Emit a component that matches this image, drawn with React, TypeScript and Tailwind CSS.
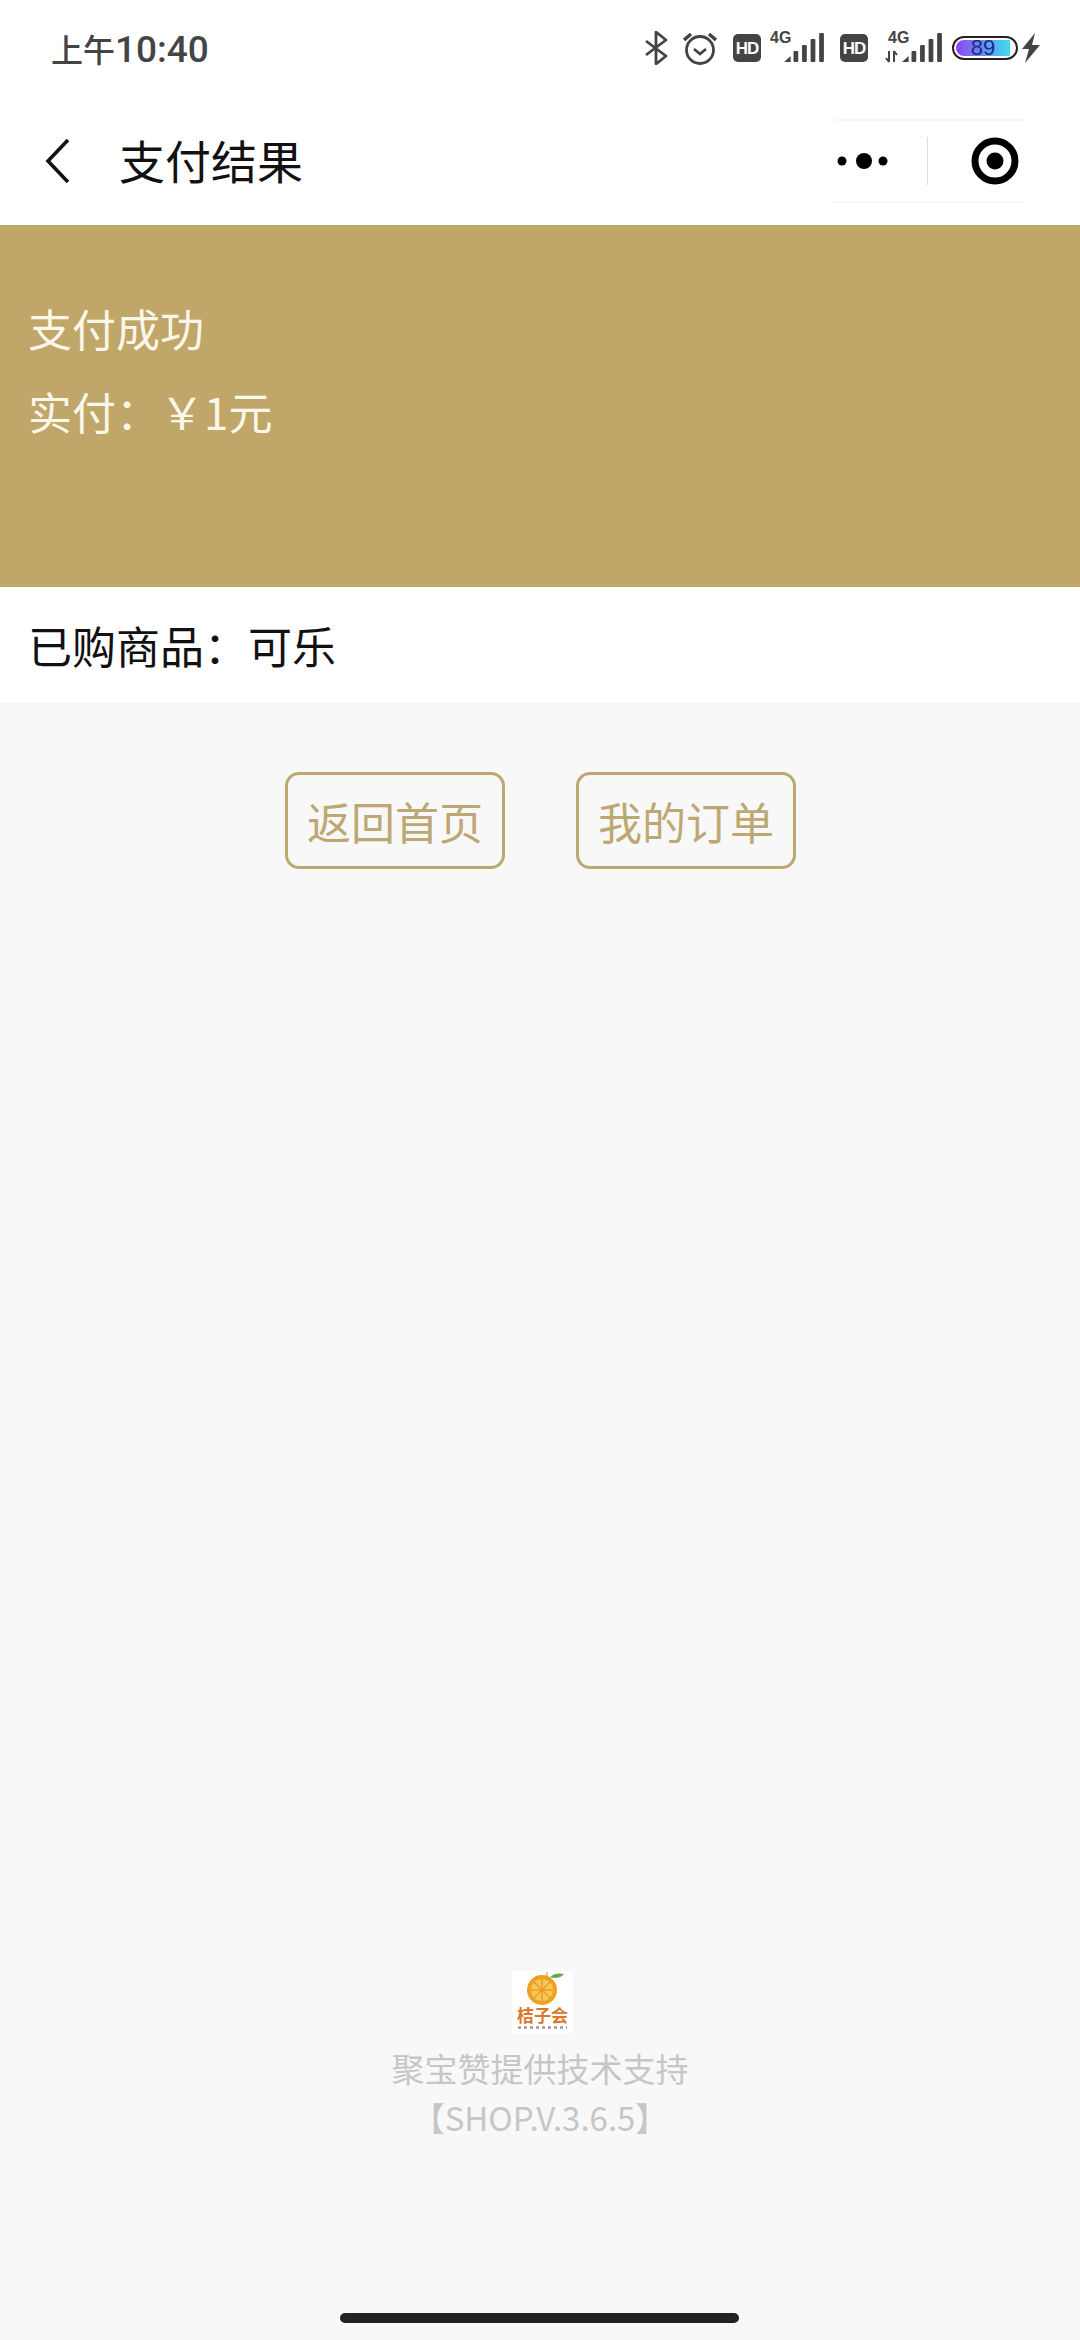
const cjk = "font-['Noto_Sans_CJK_SC','Noto_Sans',sans-serif]";

function Signal({ x = 0 }: { x?: number }) {
  return (
    <g fill="#444" transform={`translate(${x} 0) scale(0.95 1)`}>
      <path d="M0 29 L7 23 V29 Z" />
      <rect x="10" y="18" width="5" height="11" rx="1" />
      <rect x="19" y="12" width="5" height="17" rx="1" />
      <rect x="28" y="6" width="5" height="23" rx="1" />
      <rect x="37" y="0" width="5" height="29" rx="1" />
    </g>
  );
}

function HD() {
  return (
    <div className="w-[28px] h-[28px] rounded-[5px] bg-[#444] flex items-center justify-center text-white text-[17px] leading-none font-bold font-['Liberation_Sans',sans-serif] tracking-[-1px]">
      HD
    </div>
  );
}

function StatusBar() {
  return (
    <div className="h-[90px] pl-[51px] pr-[39px] flex items-start justify-between bg-white">
      <div className={`mt-[28px] text-[32px] leading-[40px] font-medium text-[#444] ${cjk} flex items-baseline`}>
        <span className="text-[32px]">上午</span>
        <span className="text-[37px] font-['Roboto',sans-serif] font-medium">10:40</span>
      </div>
      <div className="mt-[31px] flex items-center h-[34px]">
        <svg width="24" height="34" viewBox="0 0 24 34" fill="none" stroke="#444" strokeWidth="2.8">
          <path d="M1 10 L21 25 L11 33 V1 L21 9 L1 24" strokeLinejoin="round" />
        </svg>
        <svg width="36" height="34" viewBox="0 0 36 34" fill="none" stroke="#444" strokeWidth="2.8" className="ml-[13px]">
          <circle cx="18" cy="19" r="13.5" />
          <path d="M12 18 L18 23 L24 18" />
          <path d="M2 9 L9 3 M34 9 L27 3" strokeWidth="3.6" />
        </svg>
        <div className="ml-[15px]"><HD /></div>
        <div className="ml-[9px] relative w-[54px] h-[34px]">
          <span className="absolute left-0 -top-[1px] text-[16px] leading-[16px] font-semibold text-[#444] font-['Liberation_Sans',sans-serif]">4G</span>
          <svg width="54" height="30" viewBox="0 0 54 30" className="absolute left-0 top-[2px]"><Signal x={14} /></svg>
        </div>
        <div className="ml-[16px]"><HD /></div>
        <div className="ml-[17px] relative w-[58px] h-[34px]">
          <span className="absolute left-[3px] -top-[1px] text-[16px] leading-[16px] font-semibold text-[#444] font-['Liberation_Sans',sans-serif]">4G</span>
          <svg width="58" height="30" viewBox="0 0 58 30" className="absolute left-0 top-[2px]">
            <path d="M4 18 V29 M1 25 L4 29 M9 18 V29 M9 18 L12 22" stroke="#444" strokeWidth="2" fill="none" />
            <Signal x={17} />
          </svg>
        </div>
        <div className="ml-[9px] w-[66px] h-[24px] rounded-full border-[2.5px] border-[#222] p-[2px] flex">
          <div className="relative w-[54px] h-full rounded-l-full bg-gradient-to-r from-[#8b3ff0] via-[#5f8ff0] to-[#3fdcf0] flex items-center justify-center text-[22px] leading-none text-[#25258a] font-['Liberation_Sans',sans-serif]">
            89
          </div>
        </div>
        <svg width="20" height="30" viewBox="0 0 20 30" fill="#444" className="ml-[3px]">
          <path d="M14 0 L1 16 H8 L4 30 L19 12 H11 Z" />
        </svg>
      </div>
    </div>
  );
}

function NavBar() {
  return (
    <div className="h-[135px] pt-[7px] pl-[45px] pr-[55px] flex items-center bg-white">
      <svg width="24" height="46" viewBox="0 0 24 46" fill="none" stroke="#111" strokeWidth="3.6" className="shrink-0">
        <path d="M23 2 L3 23 L23 44" />
      </svg>
      <div className={`ml-[50px] mt-[-4px] text-[46px] leading-none text-[#111] ${cjk}`}>支付结果</div>
      <div className="ml-auto w-[192px] h-[84px] border-y-2 border-[#f8f8f8] flex items-center">
        <svg width="52" height="18" viewBox="0 0 52 18" fill="#000" className="ml-[3px]">
          <circle cx="6" cy="9" r="4.5" />
          <circle cx="28" cy="9" r="8" />
          <circle cx="47" cy="9" r="4.5" />
        </svg>
        <div className="ml-[39px] w-[1px] h-[48px] bg-[#dddddd]" />
        <svg width="48" height="48" viewBox="0 0 48 48" fill="none" className="ml-[43px]">
          <circle cx="24" cy="24" r="20" stroke="#000" strokeWidth="7" />
          <circle cx="24" cy="24" r="8.5" fill="#000" />
        </svg>
      </div>
    </div>
  );
}

function Button({ label }: { label: string }) {
  return (
    <div className={`w-[220px] h-[97px] rounded-[14px] border-[3px] border-[#bda873] flex items-center justify-center text-[44px] leading-none text-[#bda873] ${cjk}`}>
      {label}
    </div>
  );
}

function Logo() {
  return (
    <div className="ml-[5px] w-[61px] h-[62px] bg-white flex flex-col items-center">
      <svg width="50" height="35" viewBox="0 0 50 35" className="shrink-0">
        <circle cx="24" cy="19" r="15" fill="#f0a020" />
        <circle cx="24" cy="19" r="11" fill="#f6c65a" />
        <path d="M24 8 V30 M13 19 H35 M16 11 L32 27 M32 11 L16 27" stroke="#e9a01f" strokeWidth="1.6" />
        <path d="M29 1 V5" stroke="#c98a2a" strokeWidth="1" />
        <path d="M32 6 C36 2 41 2 46 3 C43 7 37 8 32 6 Z" fill="#6aa84a" />
      </svg>
      <div className={`text-[17px] leading-[18px] font-bold text-[#e0762a] ${cjk}`}>桔子会</div>
      <svg width="52" height="5" viewBox="0 0 52 5" className="mt-[1px]">
        <path d="M1 2.5 H50" stroke="#999" strokeWidth="2.5" strokeDasharray="3 3" />
      </svg>
    </div>
  );
}

export default function App() {
  return (
    <div className={`w-[1080px] h-[2340px] overflow-hidden flex flex-col bg-[#f8f8f8] ${cjk}`}>
      <StatusBar />
      <NavBar />
      <div className="h-[362px] bg-[#c0a668] px-[28px] pt-[82px] text-[#fbf6ea] text-[44px] leading-[43px]">
        <div>支付成功</div>
        <div className="mt-[40px] flex items-baseline">
          <span>实付：</span>
          <span>￥1元</span>
        </div>
      </div>
      <div className="h-[116px] bg-white px-[28px] flex items-center text-[44px] leading-none text-[#111]">
        已购商品：可乐
      </div>
      <div className="mt-[69px] pl-[285px] flex gap-[71px]">
        <Button label="返回首页" />
        <Button label="我的订单" />
      </div>
      <div className="mt-[1102px] flex flex-col items-center">
        <Logo />
        <div className="mt-[15px] text-[33px] leading-[40px] text-[#c6c6c6]">聚宝赞提供技术支持</div>
        <div className="mt-[9px] text-[33px] leading-[40px] text-[#c6c6c6]">【SHOP.V.3.6.5】</div>
      </div>
      <div className="mt-[176px] ml-[340px] w-[399px] h-[10px] rounded-full bg-[#222]" />
    </div>
  );
}
